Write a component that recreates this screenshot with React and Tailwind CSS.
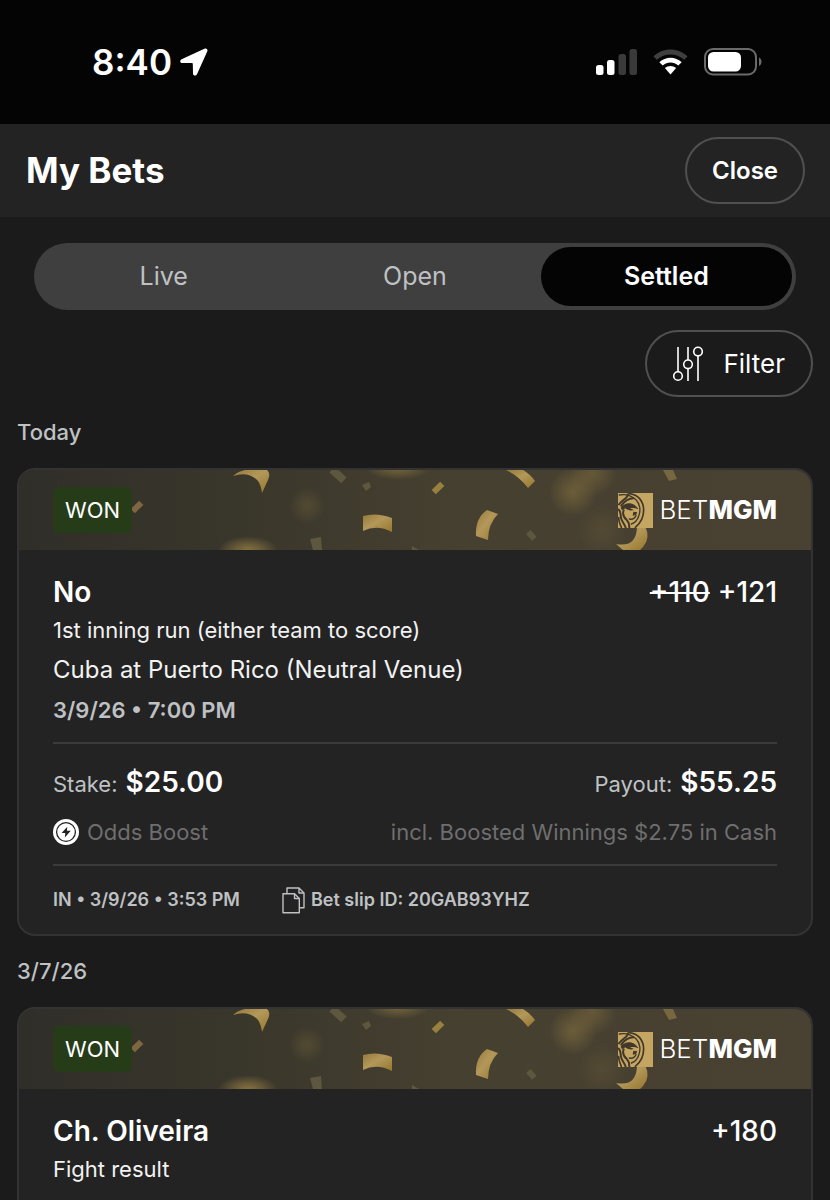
import React, { useState } from 'react';

const TABS = ['Live', 'Open', 'Settled'];

const SECTIONS = [
  {
    date: 'Today',
    bets: [
      {
        pick: 'No',
        oldOdds: '+110',
        odds: '+121',
        market: '1st inning run (either team to score)',
        event: 'Cuba at Puerto Rico (Neutral Venue)',
        startsAt: '3/9/26 • 7:00 PM',
        stake: '$25.00',
        payout: '$55.25',
        boost: 'incl. Boosted Winnings $2.75 in Cash',
        placed: 'IN • 3/9/26 • 3:53 PM',
        slipId: '20GAB93YHZ',
      },
    ],
  },
  {
    date: '3/7/26',
    bets: [{ pick: 'Ch. Oliveira', odds: '+180', market: 'Fight result' }],
  },
];

const StatusBar = () => (
  <div className="flex h-[124px] shrink-0 items-center justify-between bg-[#040404] pl-[92px] pr-[68px] text-white">
    <div className="flex items-center gap-2">
      <span className="text-[35px] font-semibold leading-none">8:40</span>
      <svg width="28" height="28" viewBox="0 0 28 28" fill="currentColor" aria-hidden="true">
        <path d="M24.4.8 1.6 11.2C-.6 12.300 0 15 2.200 15l9.800.1c.6 0 .8.3.8.8l.2 9.600c0 2.400 3 2.900 4 .8L27.200 3.600C28.200 1.500 26.500-.2 24.400.8Z" />
      </svg>
    </div>
    <div className="flex items-center gap-4">
      <svg width="41" height="28" viewBox="0 0 41 28" aria-hidden="true">
        <rect x="0" y="17" width="7.500" height="10" rx="2.500" fill="#fff" />
        <rect x="11" y="12" width="7.500" height="15" rx="2.500" fill="#fff" />
        <rect x="22.500" y="6" width="7.500" height="21" rx="2.500" fill="#3a3a3a" />
        <rect x="33.500" y="1" width="7.500" height="26" rx="2.500" fill="#3a3a3a" />
      </svg>
      <svg width="35" height="28" viewBox="0 0 36 28" aria-hidden="true">
        <path d="M.5 8.300C10-1.300 26-1.300 35.500 8.300L32 11.800C24 4.400 12 4.400 4 11.800Z" fill="#3f3f3f" />
        <path d="M6.500 14.200C13 8 23 8 29.500 14.200L26 17.600C21.500 13.600 14.500 13.600 10 17.600Z" fill="#fff" />
        <path d="M12.200 20.100C15.500 17.300 20.500 17.300 23.800 20.100L18 26.800Z" fill="#fff" />
      </svg>
      <svg width="58" height="28" viewBox="0 0 58 28" aria-hidden="true">
        <rect x="1" y="1" width="51" height="25.500" rx="8" fill="none" stroke="#6a6a6a" strokeWidth="2" />
        <rect x="4" y="4" width="33" height="19.500" rx="5.500" fill="#fff" />
        <path d="M55 9.500c3.400 1.200 3.400 7.300 0 8.500Z" fill="#6a6a6a" />
      </svg>
    </div>
  </div>
);

const FilterIcon = () => (
  <svg width="30" height="36" viewBox="0 0 30 36" fill="none" stroke="currentColor" strokeWidth="1.600" aria-hidden="true">
    <path d="M5 1v24.700M15 1v13M15 22.600V35M25 9.900V35" />
    <circle cx="5" cy="30" r="4.300" />
    <circle cx="15" cy="18.300" r="4.300" />
    <circle cx="25" cy="5.600" r="4.300" />
  </svg>
);

const BoostIcon = () => (
  <svg width="26" height="26" viewBox="0 0 26 26" aria-hidden="true">
    <circle cx="13" cy="13" r="13" fill="#fff" />
    <circle cx="13" cy="13" r="9.400" fill="none" stroke="#232323" strokeWidth="1.300" />
    <path d="M14.300 7.800 8.600 14h3.700l-.5 4.400 6-6.700h-3.900Z" fill="#232323" />
  </svg>
);

const CopyIcon = () => (
  <svg width="23" height="27" viewBox="0 0 23 27" fill="none" stroke="currentColor" strokeWidth="1.400" strokeLinejoin="round" aria-hidden="true">
    <path d="M1 6.800h11.500L17.300 11.500V25.800H1Z" />
    <path d="M12.500 6.800v4.700h4.800" />
    <path d="M5 6.500V1h12L22 6v14.700h-4.400" />
    <path d="M17 1v5h5" />
  </svg>
);

const Confetti = () => (
  <svg className="absolute inset-0 h-full w-full" viewBox="0 0 792 80" preserveAspectRatio="xMidYMid slice" aria-hidden="true">
    <defs>
      <linearGradient id="sky" x1="0" x2="1" y1="0" y2="0">
        <stop offset="0" stopColor="#302e29" />
        <stop offset="0.300" stopColor="#3a372b" />
        <stop offset="0.550" stopColor="#464030" />
        <stop offset="1" stopColor="#494131" />
      </linearGradient>
      <linearGradient id="gold" x1="0" x2="1" y1="0" y2="1">
        <stop offset="0" stopColor="#94793b" />
        <stop offset="0.450" stopColor="#b3985a" />
        <stop offset="1" stopColor="#96762d" />
      </linearGradient>
      <radialGradient id="glow">
        <stop offset="0" stopColor="#84703f" />
        <stop offset="0.400" stopColor="#84703f" stopOpacity="0.650" />
        <stop offset="1" stopColor="#84703f" stopOpacity="0" />
      </radialGradient>
    </defs>
    <rect width="792" height="80" fill="url(#sky)" />
    <g fill="url(#glow)">
      <ellipse cx="229" cy="80" rx="30" ry="14" />
      <ellipse cx="379" cy="-1" rx="32" ry="11" opacity="0.700" />
      <circle cx="288" cy="36" r="18" opacity="0.300" />
      <circle cx="554" cy="22" r="24" opacity="0.600" />
      <circle cx="573" cy="3" r="24" opacity="0.500" />
      <circle cx="583" cy="60" r="24" opacity="0.200" />
    </g>
    <path d="M214 6C217 3 221 1 226 0H248Q252 3 249 10L243 23Q242 15 239 11 230 1 214 6Z" fill="url(#gold)" />
    <path d="M344 46Q358 42 373 48V62Q358 54 344 61Z" fill="url(#gold)" />
    <path d="M487 0H504Q511 4 516 11L509 18Q500 6 487 0Z" fill="url(#gold)" />
    <path d="M468 40 479 44Q469 54 469 70L457 66Q456 48 468 40Z" fill="url(#gold)" />
    <path d="M618 56H626Q632 68 624 77L621 80H604L597 74Q618 78 618 56Z" fill="url(#gold)" />
    <rect x="112" y="34" width="12" height="6" fill="#806640" transform="rotate(-45 118 37)" />
    <rect x="413" y="15" width="12" height="6" fill="#98803f" transform="rotate(-45 419 18)" />
    <g fill="#5e5740">
      <rect x="311" y="1" width="16" height="8" transform="rotate(42 319 5)" />
      <path d="M343 15 350 12 352 17 347 21Z" />
      <path d="M291 69 302 67 303 80H294Z" />
      <path d="M393 76 400 80H393Z" />
      <rect x="508" y="62" width="9" height="6" transform="rotate(48 512 65)" />
      <path d="M644 0H654L658 9 650 11Z" fill="#766740" />
    </g>
  </svg>
);

const LionMark = () => (
  <svg width="35" height="35" viewBox="0 0 105 105" aria-hidden="true">
    <rect width="105" height="105" fill="#c5a562" />
    <g fill="none" stroke="#40382a" strokeLinecap="round">
      <path d="M34 2C60 4 76 24 77 50 77 72 68 90 52 103" strokeWidth="5" />
      <path d="M4 6C22 2 40 8 54 20 66 32 69 52 62 70 58 82 50 90 40 93" strokeWidth="4" />
      <path d="M30 4C28 16 14 20 3 34M46 16C32 16 20 24 10 38" strokeWidth="6" />
      <path d="M2 50C10 56 6 66 10 78 13 88 20 94 23 104" strokeWidth="6" />
      <path d="M17 52C12 64 18 74 27 82 33 88 34 96 34 104" strokeWidth="6" />
      <path d="M2 74C2 86 6 94 10 103" strokeWidth="5" />
      <path d="M34 78C42 80 50 76 54 68" strokeWidth="4" />
    </g>
    <path d="M8 44C18 30 36 26 50 36L62 48C52 46 44 43 36 46L48 51C38 54 28 52 22 46L12 52Z" fill="#40382a" />
    <path d="M46 56 58 58 54 66 44 68Z" fill="#40382a" />
  </svg>
);

const CardBanner = () => (
  <div className="relative h-20 overflow-hidden">
    <Confetti />
    <div className="relative flex h-full items-center justify-between px-[34px]">
      <span className="rounded-md bg-[#263c18] px-3 text-[22px] leading-[46px] text-white">WON</span>
      <span className="flex items-center gap-[6px] text-white">
        <LionMark />
        <span className="text-[26px] leading-none">
          <span className="font-light">BET</span>
          <span className="font-extrabold">MGM</span>
        </span>
      </span>
    </div>
  </div>
);

const Amount = ({ label, value }) => (
  <p className="flex items-baseline gap-2 text-[22px] text-[#bfc1c3]">
    {label}: <strong className="text-[28px] font-semibold text-white">{value}</strong>
  </p>
);

const BetCard = ({ bet }) => (
  <article className="overflow-hidden rounded-[18px] border-2 border-[#333333] bg-[#232323]">
    <CardBanner />
    <div className="px-[34px] pt-6">
      <div className="flex items-center justify-between text-[28px] leading-9 text-white">
        <h3 className="font-semibold">{bet.pick}</h3>
        <p className="flex gap-2 font-medium">
          {bet.oldOdds && <s>{bet.oldOdds}</s>}
          <span>{bet.odds}</span>
        </p>
      </div>
      <p className="text-[22px] leading-10 text-[#f2f2f2]">{bet.market}</p>
      {bet.event && <p className="text-[24px] leading-10 text-[#f2f2f2]">{bet.event}</p>}
      {bet.startsAt && <p className="text-[22px] font-semibold leading-10 text-[#bfc1c3]">{bet.startsAt}</p>}

      {/* Stake and payout */}
      {bet.stake && (
        <div className="mt-3 border-y-2 border-[#3b3b3b] pb-3 pt-[18px]">
          <div className="flex items-baseline justify-between leading-10">
            <Amount label="Stake" value={bet.stake} />
            <Amount label="Payout" value={bet.payout} />
          </div>
          <div className="mt-2 flex items-center justify-between text-[22px] leading-10 text-[#6e6e6e]">
            <p className="flex items-center gap-2">
              <BoostIcon />
              Odds Boost
            </p>
            <p>{bet.boost}</p>
          </div>
        </div>
      )}

      {/* Slip details */}
      {bet.slipId ? (
        <div className="flex items-center gap-[42px] py-5 text-[18px] font-semibold leading-7 text-[#bfc1c3]">
          <p>{bet.placed}</p>
          <button type="button" className="flex items-center gap-[6px]">
            <CopyIcon />
            Bet slip ID: {bet.slipId}
          </button>
        </div>
      ) : (
        <div className="h-10" />
      )}
    </div>
  </article>
);

const App = () => {
  const [tab, setTab] = useState('Settled');

  return (
    <div className="flex h-screen flex-col overflow-hidden bg-[#1b1b1b] font-['Inter','Liberation_Sans',sans-serif]">
      <StatusBar />

      <header className="flex shrink-0 items-center justify-between bg-[#232323] py-[13px] pl-[26px] pr-[25px] text-white">
        <h1 className="text-[35px] font-bold leading-none">My Bets</h1>
        <button type="button" className="h-[67px] rounded-full border-2 border-[#505050] px-[25px] text-[24px] font-semibold">
          Close
        </button>
      </header>

      <main className="min-h-0 flex-1 overflow-y-auto px-[17px] pt-[26px] [scrollbar-width:none]">
        <nav className="mx-[17px] flex h-[67px] rounded-full bg-[#3f3f3f] p-1">
          {TABS.map((name) => (
            <button
              key={name}
              type="button"
              onClick={() => setTab(name)}
              className={
                name === tab
                  ? 'flex-1 rounded-full bg-[#040404] text-[25px] font-semibold text-white'
                  : 'flex-1 rounded-full text-[25px] text-[#bfc1c3]'
              }
            >
              {name}
            </button>
          ))}
        </nav>

        <div className="flex justify-end pt-5">
          <button type="button" className="flex h-[67px] items-center gap-5 rounded-full border-2 border-[#505050] px-[26px] text-[26px] text-white">
            <FilterIcon />
            Filter
          </button>
        </div>

        {SECTIONS.map((section) => (
          <section key={section.date}>
            <h2 className="flex h-[71px] items-center text-[22px] font-medium text-[#bfc1c3]">{section.date}</h2>
            {section.bets.map((bet) => (
              <BetCard key={bet.pick} bet={bet} />
            ))}
          </section>
        ))}
      </main>
    </div>
  );
};

export default App;
